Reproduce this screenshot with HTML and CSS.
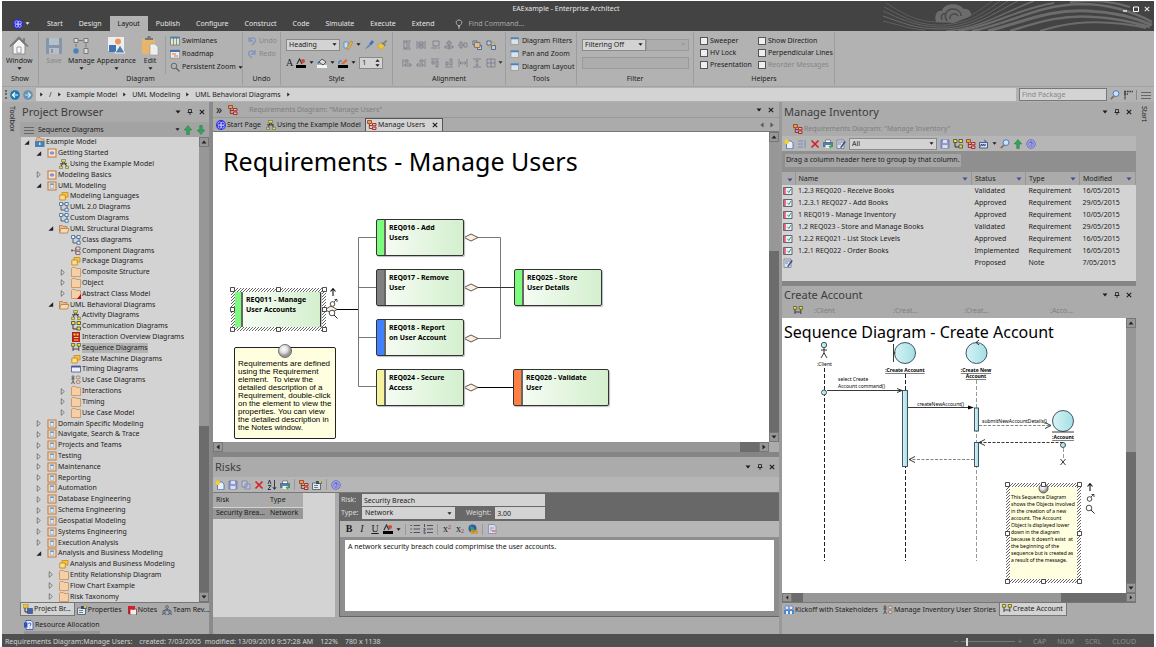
FILE: index.html
```html
<!DOCTYPE html>
<html lang="en">
<head>
<meta charset="utf-8">
<title>EAExample - Enterprise Architect</title>
<link rel="stylesheet" href="styles.css">
</head>
<body>
<svg class="defs" aria-hidden="true">
  <defs>
    <pattern id="hatch" width="3" height="3" patternUnits="userSpaceOnUse"><rect width="3" height="3" fill="#fff"/><path d="M-1 1L1-1M0 3L3 0M2 4L4 2" stroke="#555" stroke-width=".9"/></pattern>
    <radialGradient id="pin" cx=".4" cy=".35"><stop offset="0" stop-color="#fff"/><stop offset=".6" stop-color="#ddd"/><stop offset="1" stop-color="#999"/></radialGradient>
    <linearGradient id="aqua"><stop offset="0" stop-color="#d6f3f5"/><stop offset="1" stop-color="#a4dfe4"/></linearGradient>
  </defs>
  <symbol id="orb" viewBox="0 0 10 10"><circle cx="5" cy="5" r="4.900" fill="#2a2ae0"/><g fill="none" stroke="#e4e4ff" stroke-width=".7"><circle cx="3.600" cy="3.600" r="1.700"/><circle cx="6.600" cy="3.800" r="1.700"/><circle cx="3.800" cy="6.600" r="1.600"/><circle cx="6.600" cy="6.600" r="1.600"/></g></symbol>
  <symbol id="house" viewBox="0 0 20 20"><path d="M4 9v9h12V9L10 3z" fill="#f4f4f4" stroke="#8a8a8a"/><path d="M1 10.500 10 1.500l9 9M15 2v4" fill="none" stroke="#777" stroke-width="1.700"/><path d="M8 11h4v6H8z" fill="#fff" stroke="#999"/></symbol>
  <symbol id="save" viewBox="0 0 20 20"><path d="M2 2h16v16H2z" fill="#8496a8"/><path d="M5 2h10v7H5z" fill="#b4c0ca"/><path d="M5 12h10v6H5z" fill="#b8bec4"/><path d="M7 13h2v4H7z" fill="#8496a8"/></symbol>
  <symbol id="manage" viewBox="0 0 20 20"><g fill="#ddd" stroke="#777"><path d="M3 2.500h4v4H3zM13 2.500h4v4h-4zM13 12.500h4v5h-4z"/></g><path d="M8 4.500h4M5 8v3M15 7.500v4" stroke="#777" fill="none"/><circle cx="5" cy="15" r="2.700" fill="#4a82bd"/></symbol>
  <symbol id="appearance" viewBox="0 0 20 20"><path d="M2 1h16v14H2z" fill="#eee"/><circle cx="12" cy="5.500" r="3" fill="#e99a5b"/><path d="M3 9h7v7H3z" fill="#3f75b5"/><path d="M9 17l5-8 5 8z" fill="#4c7fb8" stroke="#eee"/></symbol>
  <symbol id="edit" viewBox="0 0 20 20"><path d="M2 3h13v15H2z" fill="#e7b669"/><path d="M5 4V2h2a2 2 0 0 1 4 0h2v2z" fill="#777"/><path d="M10 8h5l3 3v8h-8z" fill="#eee" stroke="#999" stroke-width=".6"/></symbol>
  <symbol id="lanes" viewBox="0 0 10 10"><path d="M.5 1h9v8h-9z" fill="#e9e4cc" stroke="#577" stroke-width=".7"/><path d="M.5 1h9v1.500h-9z" fill="#3f7fbf"/><path d="M3.500 2v7M6.500 2v7" stroke="#577" stroke-width=".7"/></symbol>
  <symbol id="roadmap" viewBox="0 0 10 10"><path d="M.5 1h9v8h-9z" fill="#eee" stroke="#777" stroke-width=".5"/><path d="M0 1h10v2H0z" fill="#3f75b5"/><path d="M2 5h4M4 7h4" stroke="#e07030" stroke-width="1.200"/></symbol>
  <symbol id="lens" viewBox="0 0 10 10"><circle cx="4" cy="4" r="2.800" fill="none" stroke="#666"/><path d="M6 6l3.500 3.500" stroke="#666" stroke-width="1.400"/></symbol>
  <symbol id="undo" viewBox="0 0 10 10"><path d="M2 1v4h4M2 5c2-5 8-3 6 1L5 9" fill="none" stroke="#8295bd" stroke-width="1.300"/></symbol>
  <symbol id="redo" viewBox="0 0 10 10"><path d="M8 1v4H4M8 5C6 0 0 2 2 6l3 3" fill="none" stroke="#8295bd" stroke-width="1.300"/></symbol>
  <symbol id="pencil" viewBox="0 0 10 10"><path d="M1 2h4v6H1z" fill="#cde" stroke="#58c" stroke-width=".8"/><path d="M4 7.500 8 1l2 1-4 7-2 1z" fill="#e5b72f" stroke="#765" stroke-width=".4"/></symbol>
  <symbol id="brush" viewBox="0 0 10 10"><path d="M1 9.500l3.500-5 2 1.500z" fill="#5a8ac0"/><path d="M5 4l3-4 2 2-3 3.500z" fill="#4270b8"/></symbol>
  <symbol id="painter" viewBox="0 0 10 10"><path d="M0 5l4-2 4 3-4 4z" fill="#efc53b" stroke="#a80" stroke-width=".4"/><path d="M4 3l2-1 3 3-1 1z" fill="#58a"/><path d="M7 3l2.500-2.500" stroke="#974" stroke-width="1.600"/></symbol>
  <symbol id="fontcolor" viewBox="0 0 10 10"><path d="M0 7h10v3H0z"/><path d="M1 6 3.500 1 6 6" fill="none" stroke="#334" stroke-width="1.200"/><circle cx="7" cy="3" r="2" fill="#d04a30"/></symbol>
  <symbol id="fillcolor" viewBox="0 0 10 10"><path d="M0 7h10v3H0z" fill="#f2f7ee"/><path d="M2 4l3-3 4 3-3 3z" fill="#ddd" stroke="#456"/><path d="M0 5l2-2v3z" fill="#37c"/></symbol>
  <symbol id="linecolor" viewBox="0 0 10 10"><path d="M0 7h10v3H0z"/><path d="M1 6V3h3" fill="none" stroke="#37b"/><path d="M3 6 8 1l1.500 1.500L6 6z" fill="#e46a2c"/></symbol>
  <symbol id="winlet" viewBox="0 0 10 10"><path d="M1 1.500h7.500v7H1z" fill="#dde2e7" stroke="#888" stroke-width=".6"/><path d="M.7 1.500h8v1.700h-8z" fill="#4585c5"/></symbol>
  <symbol id="al1" viewBox="0 0 10 10"><path d="M1 1h8M1 9h8M7 2v6"/><path d="M2 2h3v6H2z"/></symbol>
  <symbol id="al2" viewBox="0 0 10 10"><path d="M1 1v8M9 1v8M2 5h6M3 2h4v2H3zM3 6h4v2H3z"/></symbol>
  <symbol id="al3" viewBox="0 0 10 10"><path d="M3 1h6v5H3zM1 8h6M9 7v2"/></symbol>
  <symbol id="al4" viewBox="0 0 10 10"><path d="M5 0v2M3 2h4v2H3zM1 6h8v2H1zM5 4v6"/></symbol>
  <symbol id="al5" viewBox="0 0 10 10"><path d="M0 5h2M2 2h2v6H2zM4 5h2M6 3h3v4H6z"/></symbol>
  <symbol id="al6" viewBox="0 0 10 10"><path d="M1 1v8M3 2h3v2H3zM3 6h6v2H3z"/></symbol>
  <symbol id="al7" viewBox="0 0 10 10"><path d="M9 1v8M4 2h3v2H4zM1 6h6v2H1z"/></symbol>
  <symbol id="al8" viewBox="0 0 10 10"><path d="M1 1h8M2 3h2v3H2zM6 3h2v6H6z"/></symbol>
  <symbol id="al9" viewBox="0 0 10 10"><path d="M1 9h8M2 4h2v3H2zM6 1h2v6H6z"/></symbol>
  <symbol id="al10" viewBox="0 0 10 10"><path d="M1 1v8M9 1v8M2 5h6M3.500 3.500 2 5l1.500 1.500M6.500 3.500 8 5 6.500 6.500"/></symbol>
  <symbol id="al11" viewBox="0 0 10 10"><path d="M1 1h8M1 9h8M5 2v6M3.500 3.500 5 2l1.500 1.500M3.500 6.500 5 8l1.500-1.500"/></symbol>
  <symbol id="al12" viewBox="0 0 10 10"><path d="M1 1h8v8H1zM1 5h8M5 1v8"/></symbol>
  <symbol id="front" viewBox="0 0 10 10"><path d="M1 1h4v4H1zM5.500 5.500h4v4h-4z" fill="#c8d4e4" stroke="#457" stroke-width=".8"/><path d="M2.500 2.500h5.500v5H2.500z" fill="#e8bc74" stroke="#457" stroke-width=".6"/></symbol>
  <symbol id="back" viewBox="0 0 10 10"><path d="M3 3h5.500v4H3z" fill="#e8bc74" stroke="#a83" stroke-width=".5"/><path d="M1 1h4v4H1zM5.500 5.500h4v4h-4z" fill="#b8cce4" stroke="#457" stroke-width=".8"/></symbol>
  <symbol id="left" viewBox="0 0 10 10"><circle cx="5" cy="5" r="4.800" fill="currentColor"/><path d="M8 5H2.500M5 2.500 2.500 5 5 7.500" fill="none" stroke="#fff" stroke-width="1.200"/></symbol>
  <symbol id="right" viewBox="0 0 10 10"><circle cx="5" cy="5" r="4.800" fill="currentColor"/><path d="M2 5h5.500M5 2.500 7.500 5 5 7.500" fill="none" stroke="#ddd" stroke-width="1.200"/></symbol>
  <symbol id="glass" viewBox="0 0 10 10"><circle cx="6" cy="3.600" r="2.900" fill="#cfe2fa" stroke="#4a78c4"/><path d="M4 6 .8 9.200" stroke="#8a6a50" stroke-width="1.700"/></symbol>
  <symbol id="root" viewBox="0 0 10 10"><path d="M1 3l1-2.500h3L6 2h3v6H1z" fill="#e6b98a" stroke="#a8763e" stroke-width=".6"/><path d="M0 4h9.500v6H0z" fill="#4a7fb8"/><path d="M4.200 5.500h1.200v2.500H4.200z" fill="#fff"/></symbol>
  <symbol id="viewc" viewBox="0 0 10 10"><path d="M1 1h8v8H1z" fill="#f7e4cc" stroke="#c07d45" stroke-width="1.100"/><ellipse cx="5" cy="5" rx="2.300" ry="1.700" fill="#7f95dd"/></symbol>
  <symbol id="viewb" viewBox="0 0 10 10"><path d="M1 1h8v8H1z" fill="#f5dcc0" stroke="#c07d45" stroke-width="1.100"/><path d="M3.300 2.700h3.400v4.600H3.300z" fill="#dceaf5" stroke="#78a0c8" stroke-width=".6"/><path d="M3.300 2.700h3.400v1.200H3.300z" fill="#5f90c4"/></symbol>
  <symbol id="folder" viewBox="0 0 10 10"><path d="M.5 9.500v-8l.7-1h3l.8 1h4.500v8z" fill="#f7cfa6" stroke="#c88d56" stroke-width=".8"/></symbol>
  <symbol id="foldero" viewBox="0 0 10 10"><path d="M.5 9V1.500h3l1 1H8v2" fill="#e9b98b" stroke="#b57a45" stroke-width=".8"/><path d="M.5 9 2 4.500h8L8.500 9z" fill="#f8d9b5" stroke="#b57a45" stroke-width=".8"/></symbol>
  <symbol id="folderr" viewBox="0 0 10 10"><use href="#folder"/><path d="M6 10l4-5v5z" fill="#c00018"/></symbol>
  <symbol id="act" viewBox="0 0 10 10"><path d="M4 3 2 8M5 3 8 8M1 4.800h7" fill="none" stroke="#333" stroke-width=".9"/><path d="M2.500.500h4v2.300h-4zM.5 7.200h3v2.300h-3zM6.500 7.200h3v2.300h-3z" fill="#e2e23c" stroke="#554" stroke-width=".5"/></symbol>
  <symbol id="pkg" viewBox="0 0 10 10"><path d="M3 1.500h6v4.500H3z" fill="#f6c445" stroke="#c8891a" stroke-width=".8"/><path d="M.8 4h5.500v5H.8z" fill="#fbdf90" stroke="#c8891a" stroke-width=".9"/></symbol>
  <symbol id="cls" viewBox="0 0 10 10"><path d="M4 2h2M2 4v4h4M8 4v2" fill="none" stroke="#345" stroke-width=".8"/><path d="M.5.5h3.200v3H.5zM6 .5h3.200v3H6zM6 6.300h3.200v3H6z" fill="#eef" stroke="#369" stroke-width=".8"/></symbol>
  <symbol id="comp" viewBox="0 0 10 10"><path d="M1 4.500h3M4.500 2v5.500" stroke="#666" stroke-width=".8"/><circle cx="1" cy="4.500" r="1" fill="#844"/><path d="M5 1h4v3H5zM5 5.500h4v3H5z" fill="#e6dada" stroke="#755" stroke-width=".8"/></symbol>
  <symbol id="comm" viewBox="0 0 10 10"><path d="M2 3v5h5" fill="none" stroke="#333"/><path d="M.5.500h3.500v3H.5zM6 .500h3.500v3H6zM6 6h3.500v3H6z" fill="#e8e43a" stroke="#443" stroke-width=".8"/></symbol>
  <symbol id="inter" viewBox="0 0 10 10"><path d="M1 0h8v10H1z" fill="#b62020"/><path d="M2.500 1.500h2v2h-2zM5.500 1.500h2v2h-2zM3 5h4.500v1H3zM3 7.500h4.500v1H3z" fill="#f4d45a"/></symbol>
  <symbol id="seq" viewBox="0 0 10 10"><path d="M2 3v5M7.800 3v5M2 6h5.500" stroke="#333" fill="none" stroke-width=".9"/><path d="M.3.500h3.400v2.700H.3zM6.200.500h3.400v2.700H6.200z" fill="#efe62a" stroke="#443" stroke-width=".7"/></symbol>
  <symbol id="timing" viewBox="0 0 10 10"><path d="M.5 2h9v6h-9z" fill="#eef" stroke="#459" stroke-width=".8"/><path d="M.5 2h9v1.500h-9z" fill="#459"/></symbol>
  <symbol id="uc" viewBox="0 0 10 10"><circle cx="2" cy="1.800" r="1" fill="none" stroke="#333" stroke-width=".7"/><path d="M2 3v3M.3 4h3.400M.5 9 2 6l1.500 3" fill="none" stroke="#333" stroke-width=".7"/><ellipse cx="7.200" cy="2.400" rx="2" ry="1.500" fill="#e5d2c4" stroke="#865" stroke-width=".7"/><ellipse cx="7.200" cy="7" rx="2" ry="1.500" fill="#e5d2c4" stroke="#865" stroke-width=".7"/></symbol>
  <symbol id="req" viewBox="0 0 10 10"><path d="M.5.500h4v3h-4z" fill="#e2a62e" stroke="#933" stroke-width=".8"/><path d="M2.300 4v4.500H5M2.300 5.500H5" fill="none" stroke="#922" stroke-width=".9"/><path d="M5.500 3.500h3.500v2.300H5.500zM5.500 7h3.500v2.500H5.500z" fill="#e9c0ae" stroke="#a22020" stroke-width=".9"/></symbol>
  <symbol id="new" viewBox="0 0 10 10"><path d="M2.500 2h4.500L9 4v5.700H2.500z" fill="#e8eefa" stroke="#4a68a8" stroke-width=".8"/><circle cx="2.700" cy="2.700" r="2.300" fill="#f4d326"/></symbol>
  <symbol id="disk" viewBox="0 0 10 10"><path d="M1 1h8v8H1z" fill="#8f9bd0" stroke="#6874a8" stroke-width=".8"/><path d="M3 1h4v3H3zM2.500 6h5v3h-5z" fill="#dde"/></symbol>
  <symbol id="copy" viewBox="0 0 10 10"><path d="M1 1h5v6H1zM4 4h5v5H4z" fill="#c0c4d8" stroke="#7880a8" stroke-width=".8"/></symbol>
  <symbol id="page" viewBox="0 0 10 10"><path d="M1.500.500h5.500l2 2v7h-7.500z" fill="#d8dcea" stroke="#8088b0" stroke-width=".8"/><path d="M3 4h4M3 6h2" stroke="#8088b0" stroke-width=".8"/><path d="M5 6h4v2H5z" fill="#d88a90"/></symbol>
  <symbol id="del" viewBox="0 0 10 10"><path d="M1.500 1.500l7 7M8.500 1.500l-7 7" stroke="#d3222a" stroke-width="1.700"/></symbol>
  <symbol id="sort" viewBox="0 0 10 10"><path d="M1 4 2.500 0 4 4M1 5.500h3L1 9.500h3M7.500 0v9M5.800 7l1.700 2.500L9.200 7" fill="none" stroke="#234" stroke-width=".9"/></symbol>
  <symbol id="print" viewBox="0 0 10 10"><path d="M2.500 1h5v3h-5z" fill="#fff" stroke="#456" stroke-width=".6"/><path d="M.5 3.500h9v4h-9z" fill="#5280b0" stroke="#345" stroke-width=".5"/><path d="M2.500 6h5v3h-5z" fill="#eee"/><path d="M6 7l1.500 1.500L10 5" fill="none" stroke="#3a3" stroke-width="1.200"/></symbol>
  <symbol id="help" viewBox="0 0 10 10"><circle cx="5" cy="5" r="4.300" fill="#b0b0e4" stroke="#6c6cc8" stroke-width="1"/><circle cx="5" cy="5" r="2.400" fill="none" stroke="#6868c4" stroke-width=".8"/><path d="M4 4.200c0-1.300 2-1.300 2 0 0 .8-1 .8-1 1.600M5 6.500v.7" fill="none" stroke="#4444b4" stroke-width=".8"/></symbol>
  <symbol id="props" viewBox="0 0 10 10"><path d="M.5 3h8v6.500h-8z" fill="#e8e8e0" stroke="#456" stroke-width=".8"/><path d="M4 1h5.500v3H4z" fill="#33506e"/><path d="M2 5.500h4M2 7.500h4" stroke="#36a" stroke-width=".8"/><circle cx="8" cy="2" r="1.200" fill="#ecc640"/></symbol>
  <symbol id="words" viewBox="0 0 10 10"><path d="M.5 3.500h8v5.500h-8z" fill="#d4dcf0" stroke="#346" stroke-width=".8"/><path d="M1.500 7.500 2.500 5l1 2 1-2 1 2 1-2" fill="none" stroke="#236" stroke-width=".9"/><path d="M5 0l4 4H6z" fill="#4468b8"/></symbol>
  <symbol id="lines" viewBox="0 0 10 10"><path d="M1 2h5M1 5h5M1 8h5M8 1v8" stroke="#7a8cc0" fill="none"/></symbol>
  <symbol id="note" viewBox="0 0 10 10"><path d="M1 1h7v8.500H1z" fill="#dde2ee" stroke="#567" stroke-width=".6"/><path d="M2 3h5M2 5h3" stroke="#567" stroke-width=".7"/><path d="M4 8.500 8.500 2l1.300 1-4.500 6z" fill="#3a4a8c"/></symbol>
  <symbol id="book" viewBox="0 0 10 10"><path d="M1 1h7v8H1z" fill="#c9202a"/><path d="M3 4h6.500v6H3z" fill="#f2ecec" stroke="#633" stroke-width=".7"/><circle cx="6" cy="3" r="2" fill="#d82030"/></symbol>
  <symbol id="team" viewBox="0 0 10 10"><g fill="#c8d4e8" stroke="#345" stroke-width=".8"><path d="M5 3.500v2M2 6V5h6v1" fill="none"/><circle cx="5" cy="2" r="1.300"/><circle cx="2" cy="7" r="1.200"/><circle cx="8" cy="7" r="1.200"/><path d="M0 10c0-2 4-2 4 0zM6 10c0-2 4-2 4 0z"/></g></symbol>
  <symbol id="doc" viewBox="0 0 10 10"><path d="M2 .500h5l2 2v7H2z" fill="#eef" stroke="#3a58b0" stroke-width=".9"/><path d="M0 2.500h3.500v5H0z" fill="#2e50b4"/><path d="M4.500 4c0-1.500 2.500-1.500 2.500 0 0 1-1 1-1 2.200M6 7.500v.8" fill="none" stroke="#2e50b4" stroke-width=".9"/></symbol>
  <symbol id="browser" viewBox="0 0 10 10"><path d="M0 0h5v4H0z" fill="#ecc835" stroke="#765" stroke-width=".5"/><path d="M2 4v4h3" fill="none" stroke="#333"/><path d="M4.500 4.500h5v5h-5z" fill="#3f62b8" stroke="#234" stroke-width=".5"/></symbol>
  <symbol id="people" viewBox="0 0 10 10"><path d="M0 5h10v4H0z" fill="#4a86d0"/><circle cx="3" cy="2.800" r="2" fill="#dceaff" stroke="#4a78c0" stroke-width=".8"/><circle cx="7" cy="2.800" r="2" fill="#dceaff" stroke="#4a78c0" stroke-width=".8"/><path d="M2 6h2v3H2zM6 6h2v3H6z" fill="#e8f0ff"/></symbol>
  <symbol id="globe" viewBox="0 0 10 10"><circle cx="4.500" cy="4.500" r="4" fill="#2a5cae"/><path d="M2 2l3 1 2 3-4 1z" fill="#3c9c58"/><path d="M3.500 7h6v2h-6z" fill="none" stroke="#d89a1e" stroke-width="1.300"/></symbol>
  <symbol id="ul" viewBox="0 0 10 10"><path d="M3.500 1.500H10M3.500 5H10M3.500 8.500H10M.3 1.500h1.600M.3 5h1.600M.3 8.500h1.600" stroke="#445" fill="none" stroke-width=".9"/></symbol>
  <symbol id="ol" viewBox="0 0 10 10"><path d="M4 1.500h6M4 5h6M4 8.500h6M1.500 0v3M.5 4.500h1.500v2H.5M.5 8h1.500v2H.5" stroke="#445" fill="none" stroke-width=".9"/></symbol>
  <symbol id="upg" viewBox="0 0 10 10"><path d="M5 .500 8.800 5H6.300v4.500H3.700V5H1.200z" fill="#35a55c" stroke="#1c7a3c" stroke-width=".5"/></symbol>
  <symbol id="dng" viewBox="0 0 10 10"><path d="M5 9.500 1.200 5h2.500V.5h2.600V5h2.500z" fill="#35a55c" stroke="#1c7a3c" stroke-width=".5"/></symbol>
  <symbol id="bars" viewBox="0 0 10 10"><path d="M0 2.500h10M0 5.500h10M0 8.500h10" stroke="#666" stroke-width="1"/></symbol>
  <symbol id="shelf" viewBox="0 0 10 10"><path d="M1 1.500h9M1 4h4M2 1v8.500" stroke="#444" stroke-width="1.500" stroke-dasharray="2 .7" fill="none"/></symbol>
  <symbol id="chk" viewBox="0 0 10 10"><path d="M.5 1.500h8.500v7H.5z" fill="#e9f1ee" stroke="#445" stroke-width=".8"/><path d="M.8 1.900h2v6.200h-2z" fill="#e45a80"/><path d="M4.500 4.800 5.800 6.500 8 3" fill="none" stroke="#268a7a" stroke-width=".9"/></symbol>
  <symbol id="open" viewBox="0 0 8 8"><path d="M6.500 1.500v5H1z" fill="#222"/></symbol>
  <symbol id="shut" viewBox="0 0 8 8"><path d="M2 .800 5.500 4 2 7.200z" fill="#ddd" stroke="#555" stroke-width=".8"/></symbol>
  <symbol id="cd" viewBox="0 0 6 6"><path d="M.500 1.500h5L3 4.500z" fill="currentColor"/></symbol>
  <symbol id="cu" viewBox="0 0 6 6"><path d="M.500 4.500h5L3 1.500z" fill="currentColor"/></symbol>
  <symbol id="cl" viewBox="0 0 6 6"><path d="M4.500 .500v5L1.500 3z" fill="currentColor"/></symbol>
  <symbol id="cr" viewBox="0 0 6 6"><path d="M1.500 .500v5L4.500 3z" fill="currentColor"/></symbol>
  <symbol id="x" viewBox="0 0 6 6"><path d="M.800.800l4.400 4.400M5.200.800.800 5.200" stroke="currentColor" stroke-width="1.100"/></symbol>
  <symbol id="tack" viewBox="0 0 6 6"><path d="M1.500.500h3v3h-3zM.500 3.500h5M3 3.500V6" fill="none" stroke="currentColor" stroke-width=".8"/></symbol>
  <symbol id="tools" viewBox="0 0 10 36"><path d="M5 9V2M2.500 4.500 5 1.500l2.500 3" fill="none" stroke="#111" stroke-width="1.100"/><circle cx="4.500" cy="17" r="2.300" fill="#fff" stroke="#222" stroke-width=".8"/><path d="M6 15l3-3M6.500 12.500H9V15" fill="none" stroke="#222" stroke-width=".8"/><circle cx="4" cy="26" r="2.800" fill="#fff" stroke="#222" stroke-width=".8"/><path d="M6 28l3.500 3.500" stroke="#222"/></symbol>
</svg>

<div class="app">
  <header class="titlebar">
    <svg class="waves" viewBox="0 0 274 30" aria-hidden="true">
      <path fill="#6c6c6c" d="M56 21c-2-7 1-12 6-11 1-8 18-9 21-2 6-1 9 4 8 7L74 22z"/>
      <path fill="none" stroke="#494949" stroke-width="1.500" d="M62 19c-2-5 1-7 4-6M67 20c-4-6 0-12 6-12 5 0 8 3 8 7M70 18c-1-5 6-7 8-3"/>
      <g fill="none" stroke="#6c6c6c">
        <path stroke-width=".6" d="M6 2c14 8 26 18 50 19C85 22 99 10 112 0"/>
        <path stroke-width=".7" d="M4 6c16 8 29 17 52 18C88 25 106 10 120 0"/>
        <path stroke-width=".8" d="M3 10c18 8 31 15 55 16C90 27 112 10 128 0"/>
        <path stroke-width="1" d="M3 15c20 7 33 13 57 13 34 0 54-16 78-28"/>
        <path stroke-width=".7" d="M3 20c16 4 28 8 42 9"/>
        <path stroke-width="1.500" d="M66 30c36-3 56-18 88-30"/>
        <path stroke-width="2" d="M78 30c36-5 58-22 96-28"/>
        <path stroke-width="2.500" d="M92 30c40-8 66-26 108-27 30 0 54 8 72 18"/>
        <path stroke-width="3" d="M108 30c38-10 62-22 100-20 26 1 48 7 64 14"/>
        <path stroke-width="2.500" d="M130 30c34-11 54-16 84-14 24 1 42 6 56 10"/>
        <path stroke-width="2" d="M160 30c26-8 46-10 72-8 14 1 26 3 34 5"/>
        <path stroke-width="2" d="M190 1c26-2 42-1 60 5"/>
      </g>
    </svg>
    <div class="caption"><h1>EAExample - Enterprise Architect</h1>
      <div class="winbtns"><button aria-label="Minimize"><svg viewBox="0 0 6 6"><path d="M1 5h4" stroke="#fff" stroke-width="1.300"/></svg></button><button aria-label="Maximize"><svg viewBox="0 0 6 6"><path d="M.5 1h5v4.500h-5z" fill="none" stroke="#fff"/></svg></button><button aria-label="Close"><svg><use href="#x"/></svg></button></div>
    </div>
    <nav class="menu">
      <button class="orb" aria-label="Application menu"><svg><use href="#orb"/></svg><svg class="car"><use href="#cd"/></svg></button>
      <button>Start</button><button>Design</button><button class="on">Layout</button><button>Publish</button><button>Configure</button><button>Construct</button><button>Code</button><button>Simulate</button><button>Execute</button><button>Extend</button>
      <label class="find"><svg viewBox="0 0 8 10"><path d="M3 7.500h2M3 9h2M3 6.500C0 4 1 1 4 1s4 3 1 5.500z" fill="none" stroke="#bbb" stroke-width=".9"/></svg><input placeholder="Find Command..." aria-label="Find Command"></label>
    </nav>
  </header>

  <section class="ribbon">
    <div class="group g-show"><div class="gbody"><button class="big"><svg><use href="#house"/></svg>Window<svg class="car"><use href="#cd"/></svg></button></div><h2>Show</h2></div>
    <div class="group g-diagram"><div class="gbody">
      <button class="big dim"><svg><use href="#save"/></svg>Save</button>
      <button class="big"><svg><use href="#manage"/></svg>Manage<svg class="car"><use href="#cd"/></svg></button>
      <button class="big"><svg><use href="#appearance"/></svg>Appearance<svg class="car"><use href="#cd"/></svg></button>
      <button class="big"><svg><use href="#edit"/></svg>Edit<svg class="car"><use href="#cd"/></svg></button>
      <div class="stack ruled"><button><svg><use href="#lanes"/></svg>Swimlanes</button><button><svg><use href="#roadmap"/></svg>Roadmap</button><button><svg><use href="#lens"/></svg>Persistent Zoom<svg class="car"><use href="#cd"/></svg></button></div>
    </div><h2>Diagram</h2></div>
    <div class="group g-undo"><div class="gbody"><div class="stack dim"><button><svg><use href="#undo"/></svg>Undo</button><button><svg><use href="#redo"/></svg>Redo</button></div></div><h2>Undo</h2></div>
    <div class="group g-style"><div class="gbody rows">
      <div class="row"><span class="combo heading"><select aria-label="Text style"><option>Heading</option></select><svg class="car"><use href="#cd"/></svg></span><button aria-label="Edit style"><svg><use href="#pencil"/></svg></button><svg class="car"><use href="#cd"/></svg><button aria-label="Pick style"><svg><use href="#brush"/></svg></button><button aria-label="Apply style"><svg><use href="#painter"/></svg></button></div>
      <div class="row"><button class="serif">A</button><button aria-label="Font color"><svg><use href="#fontcolor"/></svg></button><svg class="car"><use href="#cd"/></svg><button aria-label="Fill color"><svg><use href="#fillcolor"/></svg></button><svg class="car"><use href="#cd"/></svg><button aria-label="Line color"><svg><use href="#linecolor"/></svg></button><svg class="car"><use href="#cd"/></svg><span class="combo spin"><input value="1" aria-label="Line width"><span class="ud"><svg><use href="#cu"/></svg><svg><use href="#cd"/></svg></span></span></div>
    </div><h2>Style</h2></div>
    <div class="group g-align"><div class="gbody rows align">
      <div class="row"><button aria-label="Same height"><svg><use href="#al1"/></svg></button><button aria-label="Same width"><svg><use href="#al2"/></svg></button><button aria-label="Same size"><svg><use href="#al3"/></svg></button><button aria-label="Center"><svg><use href="#al4"/></svg></button><button aria-label="Middle"><svg><use href="#al5"/></svg></button><button aria-label="Bring to front"><svg><use href="#front"/></svg></button><button aria-label="Send to back"><svg><use href="#back"/></svg></button></div>
      <div class="row"><button aria-label="Align left"><svg><use href="#al6"/></svg></button><button aria-label="Align right"><svg><use href="#al7"/></svg></button><button aria-label="Align top"><svg><use href="#al8"/></svg></button><button aria-label="Align bottom"><svg><use href="#al9"/></svg></button><button aria-label="Space across"><svg><use href="#al10"/></svg></button><button aria-label="Space down"><svg><use href="#al11"/></svg></button><button aria-label="Auto layout"><svg><use href="#al12"/></svg></button><svg class="car"><use href="#cd"/></svg></div>
    </div><h2>Alignment</h2></div>
    <div class="group g-tools"><div class="gbody"><div class="stack"><button><svg><use href="#winlet"/></svg>Diagram Filters</button><button><svg><use href="#winlet"/></svg>Pan and Zoom</button><button><svg><use href="#winlet"/></svg>Diagram Layout</button></div></div><h2>Tools</h2></div>
    <div class="group g-filter"><div class="gbody rows">
      <div class="row"><span class="combo first"><select aria-label="Filtering"><option>Filtering Off</option></select><svg class="car"><use href="#cd"/></svg></span><span class="combo off"><select aria-label="Filter value" disabled><option></option></select><svg class="car"><use href="#cd"/></svg></span></div>
      <div class="row"><span class="combo off"><input aria-label="Filter text" disabled></span></div>
    </div><h2>Filter</h2></div>
    <div class="group g-help"><div class="gbody">
      <div class="checks"><label><input type="checkbox">Sweeper</label><label><input type="checkbox">HV Lock</label><label><input type="checkbox">Presentation</label></div>
      <div class="checks"><label><input type="checkbox">Show Direction</label><label><input type="checkbox">Perpendicular Lines</label><label class="dim"><input type="checkbox" disabled>Reorder Messages</label></div>
    </div><h2>Helpers</h2></div>
  </section>

  <nav class="crumbs">
    <span class="grip"></span>
    <button class="back" aria-label="Back"><svg><use href="#left"/></svg></button><button class="fwd" aria-label="Forward"><svg><use href="#right"/></svg></button>
    <div class="path"><svg><use href="#cr"/></svg><a href="#">/</a><svg><use href="#cr"/></svg><a href="#">Example Model</a><svg><use href="#cr"/></svg><a href="#">UML Modeling</a><svg><use href="#cr"/></svg><a href="#">UML Behavioral Diagrams</a><svg><use href="#cr"/></svg></div>
    <input class="findpkg" placeholder="Find Package" aria-label="Find Package">
    <button aria-label="Search"><svg><use href="#glass"/></svg></button><button aria-label="Layout"><svg><use href="#shelf"/></svg></button><button class="menu-bars" aria-label="Menu"><svg><use href="#bars"/></svg></button>
  </nav>

  <main class="work">
    <aside class="rail left"><button>Toolbox</button></aside>

    <section class="panel browser">
      <header class="ptitle"><h2>Project Browser</h2><button aria-label="Options"><svg><use href="#cd"/></svg></button><button aria-label="Pin"><svg><use href="#tack"/></svg></button><button aria-label="Close"><svg><use href="#x"/></svg></button></header>
      <div class="pbar"><svg class="i"><use href="#bars"/></svg><span>Sequence Diagrams</span><svg class="car"><use href="#cd"/></svg><button aria-label="Up"><svg><use href="#upg"/></svg></button><button aria-label="Down"><svg><use href="#dng"/></svg></button></div>
      <div class="scroller">
        <ul class="tree">
          <li><svg class="t"><use href="#open"/></svg><svg><use href="#root"/></svg><span>Example Model</span></li>
          <li class="l1"><svg class="t"><use href="#open"/></svg><svg><use href="#viewc"/></svg><span>Getting Started</span></li>
          <li class="l2"><i class="t"></i><svg><use href="#act"/></svg><span>Using the Example Model</span></li>
          <li class="l1"><svg class="t"><use href="#shut"/></svg><svg><use href="#viewc"/></svg><span>Modeling Basics</span></li>
          <li class="l1"><svg class="t"><use href="#open"/></svg><svg><use href="#viewb"/></svg><span>UML Modeling</span></li>
          <li class="l2"><i class="t"></i><svg><use href="#pkg"/></svg><span>Modeling Languages</span></li>
          <li class="l2"><i class="t"></i><svg><use href="#cls"/></svg><span>UML 2.0 Diagrams</span></li>
          <li class="l2"><i class="t"></i><svg><use href="#cls"/></svg><span>Custom Diagrams</span></li>
          <li class="l2"><svg class="t"><use href="#open"/></svg><svg><use href="#foldero"/></svg><span>UML Structural Diagrams</span></li>
          <li class="l3"><i class="t"></i><svg><use href="#cls"/></svg><span>Class diagrams</span></li>
          <li class="l3"><i class="t"></i><svg><use href="#comp"/></svg><span>Component Diagrams</span></li>
          <li class="l3"><i class="t"></i><svg><use href="#pkg"/></svg><span>Package Diagrams</span></li>
          <li class="l3"><svg class="t"><use href="#shut"/></svg><svg><use href="#folder"/></svg><span>Composite Structure</span></li>
          <li class="l3"><svg class="t"><use href="#shut"/></svg><svg><use href="#folder"/></svg><span>Object</span></li>
          <li class="l3"><svg class="t"><use href="#shut"/></svg><svg><use href="#folderr"/></svg><span>Abstract Class Model</span></li>
          <li class="l2"><svg class="t"><use href="#open"/></svg><svg><use href="#foldero"/></svg><span>UML Behavioral Diagrams</span></li>
          <li class="l3"><i class="t"></i><svg><use href="#act"/></svg><span>Activity Diagrams</span></li>
          <li class="l3"><i class="t"></i><svg><use href="#comm"/></svg><span>Communication Diagrams</span></li>
          <li class="l3"><i class="t"></i><svg><use href="#inter"/></svg><span>Interaction Overview Diagrams</span></li>
          <li class="l3 sel"><i class="t"></i><svg><use href="#seq"/></svg><span>Sequence Diagrams</span></li>
          <li class="l3"><i class="t"></i><svg><use href="#pkg"/></svg><span>State Machine Diagrams</span></li>
          <li class="l3"><i class="t"></i><svg><use href="#timing"/></svg><span>Timing Diagrams</span></li>
          <li class="l3"><i class="t"></i><svg><use href="#uc"/></svg><span>Use Case Diagrams</span></li>
          <li class="l3"><svg class="t"><use href="#shut"/></svg><svg><use href="#folder"/></svg><span>Interactions</span></li>
          <li class="l3"><svg class="t"><use href="#shut"/></svg><svg><use href="#folder"/></svg><span>Timing</span></li>
          <li class="l3"><svg class="t"><use href="#shut"/></svg><svg><use href="#folder"/></svg><span>Use Case Model</span></li>
          <li class="l1"><svg class="t"><use href="#shut"/></svg><svg><use href="#viewb"/></svg><span>Domain Specific Modeling</span></li>
          <li class="l1"><svg class="t"><use href="#shut"/></svg><svg><use href="#viewb"/></svg><span>Navigate, Search &amp; Trace</span></li>
          <li class="l1"><svg class="t"><use href="#shut"/></svg><svg><use href="#viewb"/></svg><span>Projects and Teams</span></li>
          <li class="l1"><svg class="t"><use href="#shut"/></svg><svg><use href="#viewb"/></svg><span>Testing</span></li>
          <li class="l1"><svg class="t"><use href="#shut"/></svg><svg><use href="#viewb"/></svg><span>Maintenance</span></li>
          <li class="l1"><svg class="t"><use href="#shut"/></svg><svg><use href="#viewb"/></svg><span>Reporting</span></li>
          <li class="l1"><svg class="t"><use href="#shut"/></svg><svg><use href="#viewb"/></svg><span>Automation</span></li>
          <li class="l1"><svg class="t"><use href="#shut"/></svg><svg><use href="#viewb"/></svg><span>Database Engineering</span></li>
          <li class="l1"><svg class="t"><use href="#shut"/></svg><svg><use href="#viewb"/></svg><span>Schema Engineering</span></li>
          <li class="l1"><svg class="t"><use href="#shut"/></svg><svg><use href="#viewb"/></svg><span>Geospatial Modeling</span></li>
          <li class="l1"><svg class="t"><use href="#shut"/></svg><svg><use href="#viewb"/></svg><span>Systems Engineering</span></li>
          <li class="l1"><svg class="t"><use href="#shut"/></svg><svg><use href="#viewb"/></svg><span>Execution Analysis</span></li>
          <li class="l1"><svg class="t"><use href="#open"/></svg><svg><use href="#viewb"/></svg><span>Analysis and Business Modeling</span></li>
          <li class="l2"><i class="t"></i><svg><use href="#pkg"/></svg><span>Analysis and Business Modeling</span></li>
          <li class="l2"><svg class="t"><use href="#shut"/></svg><svg><use href="#folder"/></svg><span>Entity Relationship Diagram</span></li>
          <li class="l2"><svg class="t"><use href="#shut"/></svg><svg><use href="#folder"/></svg><span>Flow Chart Example</span></li>
          <li class="l2"><svg class="t"><use href="#shut"/></svg><svg><use href="#folder"/></svg><span>Risk Taxonomy</span></li>
        </ul>
        <div class="vs vs-tree"><svg><use href="#cu"/></svg><i></i><svg><use href="#cd"/></svg></div>
      </div>
      <div class="btabs"><button class="on"><svg><use href="#browser"/></svg>Project Br...</button><button><svg><use href="#props"/></svg>Properties</button><button><svg><use href="#book"/></svg>Notes</button><button><svg><use href="#team"/></svg>Team Rev...</button></div>
      <div class="alloc"><button><svg><use href="#doc"/></svg>Resource Allocation</button></div>
    </section>

    <div class="center">
      <section class="panel editor">
        <header class="dtitle"><span class="more">»</span><svg class="i"><use href="#req"/></svg><span class="ghost">Requirements Diagram: "Manage Users"</span><button aria-label="Options"><svg><use href="#cd"/></svg></button><button aria-label="Close"><svg><use href="#x"/></svg></button></header>
        <div class="dtabs"><button><svg><use href="#orb"/></svg>Start Page</button><button><svg><use href="#act"/></svg>Using the Example Model</button><button class="on"><svg><use href="#req"/></svg>Manage Users<svg class="cls"><use href="#x"/></svg></button><span class="pager"><svg><use href="#cl"/></svg><svg><use href="#cr"/></svg></span></div>
        <div class="scroller">
          <div class="canvas">
            <h3 class="dhead">Requirements - Manage Users</h3>
            <svg class="wires" viewBox="0 0 555 311" aria-hidden="true">
              <g fill="none" stroke="#777"><path d="M163 105.500h-17.500v149H163M145.500 155.500H163M145.500 205.500H163M265 105.500h22.500v101H265"/><path d="M265 155.500h37" stroke="#333"/><path d="M265 255.500h36M118 177.500h27" stroke="#000"/></g>
              <g fill="#fdeedd" stroke="#444" stroke-width=".9"><path d="M251 105.500l7-3.500 7 3.500-7 3.500zM251 155.500l7-3.500 7 3.500-7 3.500zM251 206.500l7-3.500 7 3.500-7 3.500zM251 255.500l7-3.500 7 3.500-7 3.500zM112 177.500l6-3.500 6 3.500-6 3.500z"/></g>
              <use href="#tools" x="115" y="155" width="10" height="36"/>
            </svg>
            <div class="req green" style="left:163px;top:87px">REQ016 - Add<br>Users</div>
            <div class="req grey" style="left:163px;top:137px">REQ017 - Remove<br>User</div>
            <div class="req blue" style="left:163px;top:187px">REQ018 - Report<br>on User Account</div>
            <div class="req yellow" style="left:163px;top:237px">REQ024 - Secure<br>Access</div>
            <div class="req green" style="left:301px;top:137px">REQ025 - Store<br>User Details</div>
            <div class="req orange wide" style="left:300px;top:237px">REQ026 - Validate<br>User</div>
            <div class="req green" style="left:20px;top:159px">REQ011 - Manage<br>User Accounts</div>
            <svg class="selbox sel-req" viewBox="0 0 97 45" aria-hidden="true"><path fill="url(#hatch)" fill-rule="evenodd" d="M1 1h95v43H1zM5 5v35h87V5z"/><g class="hd"><path d="M.5.5h4v4h-4zM46.500.5h4v4h-4zM92.500.5h4v4h-4zM.5 20.500h4v4h-4zM92.500 20.500h4v4h-4zM.5 40.500h4v4h-4zM46.500 40.500h4v4h-4zM92.500 40.500h4v4h-4z"/></g></svg>
            <div class="note">Requirements are defined<br>using the Requirement<br>element.&nbsp; To view the<br>detailed description of a<br>Requirement, double-click<br>on the element to view the<br>properties. You can view<br>the detailed description in<br>the Notes window.<svg viewBox="0 0 14 14" aria-hidden="true"><circle cx="7" cy="7" r="6.500" fill="url(#pin)" stroke="#555" stroke-width=".8"/></svg></div>
          </div>
          <div class="vs vs-main"><svg><use href="#cu"/></svg><i></i><svg><use href="#cd"/></svg></div>
        </div>
        <div class="hs hs-main"><svg><use href="#cl"/></svg><i></i><svg><use href="#cr"/></svg></div>
      </section>

      <section class="panel risks">
        <header class="ptitle"><h2>Risks</h2><button aria-label="Options"><svg><use href="#cd"/></svg></button><button aria-label="Pin"><svg><use href="#tack"/></svg></button><button aria-label="Close"><svg><use href="#x"/></svg></button></header>
        <div class="tbar"><button aria-label="New"><svg><use href="#new"/></svg></button><button aria-label="Save"><svg><use href="#disk"/></svg></button><button aria-label="Copy"><svg><use href="#copy"/></svg></button><button aria-label="Delete"><svg><use href="#del"/></svg></button><button aria-label="Sort"><svg><use href="#sort"/></svg></button><button aria-label="Print"><svg><use href="#print"/></svg></button><hr><button aria-label="Find in diagrams"><svg><use href="#req"/></svg></button><button aria-label="Properties"><svg><use href="#props"/></svg></button><hr><button aria-label="Help"><svg><use href="#help"/></svg></button></div>
        <div class="rbody">
          <div class="rlist"><table><thead><tr><th>Risk</th><th>Type</th></tr></thead><tbody><tr><td>Security Brea...</td><td>Network</td></tr></tbody></table></div>
          <div class="rform">
            <div class="fields">
              <label for="risk">Risk:</label><input id="risk" value="Security Breach">
              <label for="rtype">Type:</label><div class="row"><span class="combo"><select id="rtype"><option>Network</option></select><svg class="car"><use href="#cd"/></svg></span><label for="weight">Weight:</label><input id="weight" value="3.00"></div>
            </div>
            <div class="tbar fmt"><button class="serif b">B</button><button class="serif it">I</button><button class="serif u">U</button><button aria-label="Text color"><svg><use href="#fontcolor"/></svg></button><svg class="car"><use href="#cd"/></svg><hr><button aria-label="Bullets"><svg><use href="#ul"/></svg></button><button aria-label="Numbering"><svg><use href="#ol"/></svg></button><hr><button class="serif">x<sup>2</sup></button><button class="serif">x<sub>2</sub></button><button aria-label="Hyperlink"><svg><use href="#globe"/></svg></button><hr><button aria-label="New note"><svg><use href="#page"/></svg></button></div>
            <div class="edit"><textarea aria-label="Description">A network security breach could comprimise the user accounts.</textarea></div>
          </div>
        </div>
      </section>
    </div>

    <div class="side">
      <section class="panel inventory">
        <header class="ptitle"><h2>Manage Inventory</h2><button aria-label="Options"><svg><use href="#cd"/></svg></button><button aria-label="Pin"><svg><use href="#tack"/></svg></button><button aria-label="Close"><svg><use href="#x"/></svg></button></header>
        <div class="subt"><svg class="i"><use href="#req"/></svg><span class="ghost">Requirements Diagram: "Manage Inventory"</span></div>
        <div class="tbar"><button aria-label="New"><svg><use href="#new"/></svg></button><button aria-label="List"><svg><use href="#lines"/></svg></button><button aria-label="Delete"><svg><use href="#del"/></svg></button><button aria-label="Print"><svg><use href="#print"/></svg></button><button aria-label="Edit"><svg><use href="#note"/></svg></button><span class="combo all"><select aria-label="Show"><option>All</option></select><svg class="car"><use href="#cd"/></svg></span><button aria-label="Save"><svg><use href="#disk"/></svg></button><button aria-label="Structure"><svg><use href="#comm"/></svg></button><button aria-label="Locate"><svg><use href="#req"/></svg></button><button aria-label="Properties"><svg><use href="#words"/></svg></button><svg class="car"><use href="#cd"/></svg><button aria-label="Find"><svg><use href="#glass"/></svg></button><button aria-label="Up"><svg><use href="#upg"/></svg></button><button aria-label="Help"><svg><use href="#help"/></svg></button></div>
        <div class="groupby"><span>Drag a column header here to group by that column.</span></div>
        <div class="inv"><table>
          <colgroup><col class="c0"><col><col class="c2"><col class="c2"><col class="c4"></colgroup>
          <thead><tr><th><svg><use href="#cd"/></svg></th><th>Name<svg><use href="#cd"/></svg></th><th>Status<svg><use href="#cd"/></svg></th><th>Type<svg><use href="#cd"/></svg></th><th>Modified<svg><use href="#cd"/></svg></th></tr></thead>
          <tbody>
            <tr><td><svg><use href="#chk"/></svg></td><td>1.2.3 REQ020 - Receive Books</td><td>Validated</td><td>Requirement</td><td>16/05/2015</td></tr>
            <tr><td><svg><use href="#chk"/></svg></td><td>1.2.3.1 REQ027 - Add Books</td><td>Approved</td><td>Requirement</td><td>29/05/2015</td></tr>
            <tr><td><svg><use href="#chk"/></svg></td><td>1 REQ019 - Manage Inventory</td><td>Approved</td><td>Requirement</td><td>10/05/2015</td></tr>
            <tr><td><svg><use href="#chk"/></svg></td><td>1.2 REQ023 - Store and Manage Books</td><td>Validated</td><td>Requirement</td><td>29/05/2015</td></tr>
            <tr><td><svg><use href="#chk"/></svg></td><td>1.2.2 REQ021 - List Stock Levels</td><td>Approved</td><td>Requirement</td><td>16/05/2015</td></tr>
            <tr><td><svg><use href="#chk"/></svg></td><td>1.2.1 REQ022 - Order Books</td><td>Implemented</td><td>Requirement</td><td>16/05/2015</td></tr>
            <tr><td><svg><use href="#note"/></svg></td><td></td><td>Proposed</td><td>Note</td><td>7/05/2015</td></tr>
          </tbody>
        </table></div>
      </section>

      <section class="panel account">
        <header class="ptitle"><h2>Create Account</h2><button aria-label="Options"><svg><use href="#cd"/></svg></button><button aria-label="Pin"><svg><use href="#tack"/></svg></button><button aria-label="Close"><svg><use href="#x"/></svg></button></header>
        <div class="subt lanes"><svg class="i"><use href="#seq"/></svg><span class="ghost">:Client</span><span class="ghost">:Creat...</span><span class="ghost">:Creat...</span><span class="ghost">:Acco...</span></div>
        <div class="scroller">
          <div class="canvas">
            <h3 class="shead">Sequence Diagram - Create Account</h3>
            <svg class="wires" viewBox="0 0 344 276">
              <g stroke="#222" fill="none" stroke-dasharray="4 2"><path d="M42.500 50v193"/><path d="M123.500 56v187"/></g>
              <g stroke="#999" fill="none" stroke-dasharray="4 2"><path d="M194.500 62v181"/><path d="M281.500 130v10"/></g>
              <g stroke="#345" fill="url(#aqua)" stroke-width=".9"><circle cx="42" cy="27" r="2.700"/><circle cx="123" cy="35" r="10.500"/><circle cx="194.500" cy="35" r="10.500"/><circle cx="281" cy="103" r="10.500"/><rect x="120.500" y="72.500" width="5" height="76"/><rect x="192.500" y="90" width="4" height="23"/><rect x="192.500" y="124.500" width="4" height="24"/><circle cx="42" cy="74.500" r="2.500"/><circle cx="281" cy="127" r="2.500"/></g>
              <g stroke="#222" fill="none" stroke-width=".9"><path d="M42 30v6M39 32h6M39 40l3-5 3 5M111.500 26v18M111.500 35h2M197 22l-3 2.500 3 2.500M270 114h22M278.500 141l5 6M283.500 141l-5 6M45 72.500h75M115 70.500l5 2-5 2M126 89.500h62"/><path d="M197 107.500h72M192 141.500h-65" stroke="#777" stroke-dasharray="3 1.500"/><path d="M281 124.500h-84" stroke-dasharray="3 1.500"/><path d="M263 104.500l6 3-6 3M203 121.500l-6 3 6 3M133 138.500l-6 3 6 3"/></g>
              <path d="M186 87.500l6 2-6 2z"/>
              <g class="seqt"><text x="35" y="48">:Client</text><text x="56" y="63">select Create</text><text x="56" y="70">Account command()</text><text x="135" y="88">createNewAccount()</text><text x="200" y="105">submitNewAccountDetails()</text></g>
              <g class="seqb"><text x="123" y="54">:Create Account</text><text x="194" y="54">:Create New</text><text x="194" y="60">Account</text><text x="281" y="121">:Account</text></g>
              <use href="#tools" x="303" y="164" width="10" height="36"/>
            </svg>
            <div class="snote">This Sequence Diagram<br>shows the Objects involved<br>in the creation of a new<br>account. The Account<br>Object is displayed lower<br>down in the diagram<br>because it doesn't exist&nbsp; at<br>the beginning of the<br>sequence but is created as<br>a result of the message.</div>
            <svg class="selbox sel-note" viewBox="0 0 77 102" aria-hidden="true"><path fill="url(#hatch)" fill-rule="evenodd" d="M1 1h75v100H1zM5 5v92h67V5z"/><circle cx="38.500" cy="6.500" r="4.500" fill="url(#pin)" stroke="#444" stroke-width=".8"/><g class="hd"><path d="M.5.5h4v4h-4zM36.500.5h4v4h-4zM72.500.5h4v4h-4zM.5 49.500h4v4h-4zM72.500 49.500h4v4h-4zM.5 97.500h4v4h-4zM36.500 97.500h4v4h-4zM72.500 97.500h4v4h-4z"/></g></svg>
          </div>
          <div class="vs vs-acc"><svg><use href="#cu"/></svg><i></i><svg><use href="#cd"/></svg></div>
        </div>
        <div class="hs hs-acc"><svg><use href="#cl"/></svg><i></i><svg><use href="#cr"/></svg></div>
        <div class="btabs"><button><svg><use href="#people"/></svg>Kickoff with Stakeholders</button><button><svg><use href="#uc"/></svg>Manage Inventory User Stories</button><button class="on"><svg><use href="#seq"/></svg>Create Account</button></div>
      </section>
    </div>

    <aside class="rail right"><button>Start</button></aside>
  </main>

  <footer class="status">
    <span>Requirements Diagram:Manage Users:</span><span>created: 7/03/2005&nbsp; modified: 13/09/2016 9:57:28 AM</span><span>122%</span><span>780 x 1138</span>
    <div class="zoom"><span>−</span><input type="range" min="0" max="100" value="10" aria-label="Zoom"><span>+</span></div>
    <span class="key">CAP</span><span class="key">NUM</span><span class="key">SCRL</span><span class="key">CLOUD</span>
  </footer>
</div>
</body>
</html>
```
FILE: styles.css
```css
* { box-sizing: border-box; }
body { margin: 0; background: #fff; color: #1c1c1c; font: 7px/10px "Noto Sans", "Open Sans", sans-serif; }
h1, h2, h3, ul { margin: 0; padding: 0; font-weight: 400; font-size: 7px; }
button, input, select, textarea { font: inherit; color: inherit; margin: 0; padding: 0; border: 0; background: none; border-radius: 0; }
button { display: flex; align-items: center; white-space: nowrap; flex: none; }
select { appearance: none; width: 100%; outline: 0; }
input { min-width: 0; }
svg { display: block; flex: none; width: 10px; height: 10px; }
a { color: inherit; text-decoration: none; }
table { border-collapse: collapse; }
.defs { position: absolute; width: 0; height: 0; }
svg.car { width: 5px; height: 5px; }
.dim { color: #878787; }
.ghost { color: #7f7f7f; }
.row { display: flex; align-items: center; }

.app { display: flex; flex-direction: column; min-height: 100vh; padding: 1px 2px 0; }

.titlebar { position: relative; background: #434343; color: #e6e6e6; height: 30px; display: flex; flex-direction: column; }
.waves { position: absolute; right: 0; top: 0; width: 274px; height: 30px; }
.caption { display: flex; align-items: center; height: 15px; padding-top: 1px; position: relative; }
.caption h1 { flex: 1; text-align: center; padding-left: 8px; }
.winbtns { display: flex; gap: 5px; padding-right: 4px; }
.winbtns svg { width: 6px; height: 6px; }
.menu { display: flex; height: 15px; position: relative; }
.menu button { padding: 0 8px; }
.menu .orb { width: 37px; padding: 0 0 0 11px; gap: 2px; }
.menu .on { background: #b2b2b2; color: #111; }
.find { display: flex; align-items: center; gap: 5px; padding-left: 13px; }
.find svg { width: 8px; }
.find input { width: 60px; }
.find input::placeholder { color: #a8a8a8; }

.ribbon { display: flex; background: #b2b2b2; height: 56px; border-bottom: 1px solid #a2a2a2; padding: 1px 0; }
.group { display: flex; flex-direction: column; border-right: 1px solid #9d9d9d; flex: none; }
.group h2 { text-align: center; height: 11px; }
.gbody { flex: 1; display: flex; padding: 4px 4px 0; }
.g-show { width: 37px; }
.g-show .gbody { padding: 4px 3px 0; }
.g-diagram { width: 204px; }
.g-diagram .gbody { padding: 4px 2px 0; }
.g-undo { width: 38px; }
.g-style { width: 112px; }
.g-align { width: 113px; }
.g-tools { width: 71px; }
.g-filter { width: 117px; }
.g-help { width: 141px; }
.big { flex-direction: column; align-items: center; padding: 0 1px; min-width: 26px; }
.big svg { width: 20px; height: 20px; }
.big svg.car { width: 5px; height: 5px; }
.stack { display: flex; flex-direction: column; gap: 3px; }
.stack button { gap: 2px; height: 10px; }
.ruled { border-left: 1px solid #9d9d9d; padding-left: 4px; margin-left: 2px; }
.gbody.rows { flex-direction: column; gap: 5px; padding: 6px 4px 0 5px; }
.rows .row { gap: 3px; height: 13px; }
.g-filter .row { gap: 0; }
.align .row { gap: 4px; padding-left: 4px; }
.align svg { fill: none; stroke: #777788; stroke-width: .8; }
.align svg.car { stroke: none; color: #333; margin-left: -2px; }
.combo { display: flex; align-items: center; background: #d3d3d3; border: 1px solid #8a8a8a; height: 12px; padding: 0 2px; flex: 1; }
.first { flex: none; width: 64px; }
.heading { flex: none; width: 54px; }
.spin { flex: none; width: 24px; }
.spin input { width: 100%; }
.ud svg { width: 5px; height: 5px; }
.combo.off { background: #adadad; border-color: #9a9a9a; color: #999; }
.combo input { width: 100%; }
.serif { font: 10px/10px "Liberation Serif", serif; }
.checks { display: flex; flex-direction: column; gap: 2px; padding: 0 4px 0 2px; }
.checks label { display: flex; align-items: center; gap: 2px; height: 10px; white-space: nowrap; }
.checks input, .zoom input { appearance: none; }
.checks input { width: 8px; height: 8px; background: #eee; border: 1px solid #555; }

.crumbs { display: flex; align-items: center; gap: 3px; height: 15px; background: #b2b2b2; padding: 0 3px 0 3px; }
.grip { width: 2px; height: 9px; border-left: 2px dotted #666; }
.crumbs .back { color: #1877b5; }
.crumbs .fwd { color: #5c94b8; }
.path { flex: 1; display: flex; align-items: center; gap: 5px; background: #d3d3d3; height: 13px; padding: 0 3px; }
.path svg { width: 5px; height: 5px; }
.findpkg { width: 88px; height: 13px; background: #d3d3d3; border: 1px solid #777; padding: 0 2px; }
.findpkg::placeholder { color: #888; }
.menu-bars { border-left: 1px solid #888; padding-left: 4px; }

.work { flex: 1; display: grid; grid-template-columns: 18px 190px minmax(0, 1fr) 357px 18px; background: #ababab; }
.rail { padding-top: 4px; }
.rail button { writing-mode: vertical-rl; padding: 0; height: auto; }
.rail.left { padding-left: 5px; }
.rail.right { padding-left: 3px; }
.panel { display: flex; flex-direction: column; min-width: 0; }
.ptitle { display: flex; align-items: center; gap: 6px; height: 20px; padding: 0 4px 0 2px; }
.ptitle h2 { flex: 1; font-size: 11px; line-height: 16px; color: #3c3c3c; }
.ptitle svg, .dtitle button svg { width: 6px; height: 6px; }
.scroller { flex: 1; display: flex; min-height: 0; }
.canvas { position: relative; flex: 1; background: #fff; overflow: hidden; color: #000; }

.browser { border-right: 1px solid #8c8c8c; }
.pbar { display: flex; align-items: center; gap: 3px; height: 15px; background: #a3a3a3; padding: 0 3px 0 4px; }
.pbar span { flex: 1; padding-left: 1px; }
.tree { flex: 1; list-style: none; background: #d3d3d3; display: grid; grid-auto-rows: minmax(10px, 1fr); padding-left: 2px; margin-left: 1px; }
.tree li { display: flex; align-items: center; white-space: nowrap; }
.tree .t { width: 8px; height: 7px; margin-right: 4px; }
.tree span { margin-left: 1px; }
.tree .l1 { padding-left: 12px; }
.tree .l2 { padding-left: 24px; }
.tree .l3 { padding-left: 36px; }
.tree .sel span { background: #b4b4b4; }
.vs { width: 10px; display: flex; flex-direction: column; background: #6c6c6c; color: #222; }
.vs i { flex: 1; background: #979797; }
.vs svg, .hs svg { padding: 1px; background: #979797; border: 1px solid #777; }
.vs i + svg, .hs i + svg { margin-top: auto; }
.vs-tree i { flex: 0 0 60%; }
.vs-main i { flex: 0 0 35%; }
.vs-acc i { flex: 0 0 45%; }
.hs { height: 10px; display: flex; background: #6c6c6c; color: #222; }
.hs i { flex: 1; background: #979797; }
.hs i + svg { margin: 0 0 0 auto; }
.hs-main { margin-right: 10px; }
.hs-main i { flex: 0 0 93%; }
.hs-acc { height: 9px; }
.hs-acc i { flex: 0 0 73%; margin-left: 11px; }
.hs-acc svg { height: 9px; }
.btabs { display: flex; height: 14px; border-top: 1px solid #777; }
.btabs button { gap: 1px; padding: 0 3px 0 2px; }
.btabs .on { background: #d3d3d3; border: 1px solid #777; border-top: 0; }
.alloc { height: 18px; padding: 2px 0 0 4px; }
.alloc button { gap: 1px; height: 16px; border-bottom: 3px solid #979797; }

.center { display: flex; flex-direction: column; border-left: 3px solid #8a8a8a; }
.editor { flex: 1; }
.dtitle { display: flex; align-items: center; gap: 6px; height: 16px; padding: 0 5px 0 3px; border-bottom: 1px solid #999; }
.dtitle .more { font: 12px/10px "Noto Sans", sans-serif; }
.dtitle .ghost { flex: 1; padding-left: 5px; }
.dtabs { display: flex; height: 14px; border-bottom: 1px solid #777; padding-left: 2px; }
.dtabs button { gap: 1px; padding: 0 4px 0 1px; }
.dtabs .on { background: #d3d3d3; border: 1px solid #555; border-bottom: 0; }
.dtabs .cls { width: 6px; height: 6px; margin-left: 6px; }
.pager { margin-left: auto; display: flex; align-items: center; gap: 4px; padding-right: 4px; color: #555; }
.pager svg { width: 6px; height: 6px; }
.dhead { position: absolute; left: 10px; top: 12px; font-size: 25px; line-height: 34px; white-space: nowrap; }
.wires { position: absolute; left: 0; top: 0; width: 555px; height: 311px; }
.req { position: absolute; width: 88px; height: 37px; padding: 3px 0 0 12px; border: 1px solid #333; border-radius: 2px; font-weight: 700; line-height: 10px; white-space: nowrap; box-shadow: 1px 1px 1px #bbb; background: linear-gradient(90deg, var(--c) 7px, #666 7px, #666 9px, #f5fcf3 9px, #d4efce); }
.req.wide { width: 96px; }
.green { --c: #7dfb7d; }
.grey { --c: #808080; }
.blue { --c: #4180ff; }
.yellow { --c: #f6f19c; }
.orange { --c: #ff8040; }
.selbox { position: absolute; }
.hd { fill: #fff; stroke: #222; stroke-width: .8; }
.sel-req { left: 17px; top: 155px; width: 97px; height: 45px; }
.note { position: absolute; left: 21px; top: 215px; width: 102px; height: 92px; padding: 12px 0 0 3px; background: #ffffdf; border: 1px solid #222; border-radius: 2px; font: 8px/8px "Liberation Sans", sans-serif; white-space: nowrap; }
.note svg { position: absolute; left: 43px; top: -4px; width: 14px; height: 14px; }

.risks { height: 182px; border-top: 5px solid #858585; }
.tbar { display: flex; align-items: center; gap: 3px; height: 15px; background: #b6b6b6; padding: 0 2px; }
.tbar hr { width: 1px; height: 11px; border: 0; margin: 0 1px; background: #999; }
.rbody { height: 125px; display: flex; border-top: 1px solid #777; }
.rlist { width: 122px; background: #d3d3d3; }
.rlist table { width: 90px; table-layout: fixed; }
.rlist th { background: #ababab; height: 14px; text-align: left; font-weight: 400; padding: 0 3px; }
.rlist td { background: #979797; height: 12px; padding: 0 3px; border-top: 1px solid #d3d3d3; white-space: nowrap; }
.rlist th:first-child { width: 54px; }
.rform { flex: 1; margin-left: 4px; display: flex; flex-direction: column; background: #8e8e8e; border-left: 1px solid #666; }
.fields { display: grid; grid-template-columns: 20px 183px; gap: 1px; background: #686868; padding: 1px 0 2px 1px; color: #222; }
.fields label { color: #ddd; line-height: 12px; }
.fields > input, #weight { background: #d3d3d3; height: 12px; padding: 0 2px; }
.fields .row label { padding: 0 4px 0 11px; }
.fields .combo { flex: none; width: 93px; border-color: #d3d3d3; }
#weight { width: 50px; }
.fmt { height: 16px; gap: 3px; padding: 0 4px; }
.fmt .b { font-weight: 700; }
.fmt .it { font-style: italic; }
.fmt .u { text-decoration: underline; }
.fmt .serif { min-width: 10px; justify-content: center; }
.fmt sup, .fmt sub { font-size: 6px; line-height: 6px; color: #933; }
.fmt sup { align-self: flex-start; }
.fmt sub { align-self: flex-end; }
.edit { flex: 1; display: flex; padding: 3px 5px 5px; border-bottom: 1px solid #666; }
.edit textarea { flex: 1; resize: none; background: #fff; padding: 2px 3px; color: #111; }

.side { display: flex; flex-direction: column; border-left: 3px solid #999; }
.inventory { border-bottom: 5px solid #858585; }
.subt { display: flex; align-items: center; height: 14px; padding-left: 11px; gap: 1px; }
.all { flex: none; width: 88px; }
.groupby { background: #8f8f8f; height: 21px; padding: 3px; display: flex; align-items: flex-start; }
.groupby span { background: #a5a5a5; padding: 1px 1px 2px; }
.inv { height: 109px; background: #d3d3d3; }
.inv table { width: 100%; table-layout: fixed; }
.c0 { width: 13px; }
.c2 { width: 54px; }
.c4 { width: 56px; }
.inv th { height: 13px; background: #ababab; text-align: left; font-weight: 400; padding: 0 3px; border-right: 1px solid #979797; }
.inv th svg { float: right; width: 6px; height: 6px; margin-top: 2px; color: #3c4a98; }
.inv th:first-child { padding: 0 2px; }
.inv td { height: 12px; padding: 0 3px; white-space: nowrap; }
.inv td:first-child { padding: 0 1px; }
.account { flex: 1; }
.account .ptitle { height: 18px; }
.lanes { display: grid; grid-template-columns: 10px 68px 60px 75px 1fr; gap: 11px; }
.shead { position: absolute; left: 2px; top: 2px; font-size: 16px; line-height: 24px; white-space: nowrap; }
.account .wires { width: 344px; height: 276px; }
.seqt, .seqb { font-size: 5px; }
.seqb { font-weight: 700; text-anchor: middle; text-decoration: underline; }
.snote { position: absolute; left: 226px; top: 168px; width: 70px; height: 94px; padding: 8px 0 0 3px; background: #ffffdf; font-size: 5px; line-height: 7px; white-space: nowrap; }
.sel-note { left: 223px; top: 164px; width: 77px; height: 102px; }
.account .btabs { margin-bottom: 18px; }

.status { display: flex; align-items: center; gap: 7px; height: 13px; background: #505050; color: #d3d3d3; padding: 2px 18px 0 3px; }
.zoom { margin-left: auto; display: flex; align-items: center; gap: 3px; color: #8e8e8e; }
.zoom input { width: 54px; height: 8px; background: linear-gradient(#777, #777) center / 100% 1px no-repeat; }
.zoom input::-webkit-slider-thumb { appearance: none; width: 2px; height: 8px; background: #ddd; }
.key { color: #8e8e8e; margin-left: 4px; }
```
